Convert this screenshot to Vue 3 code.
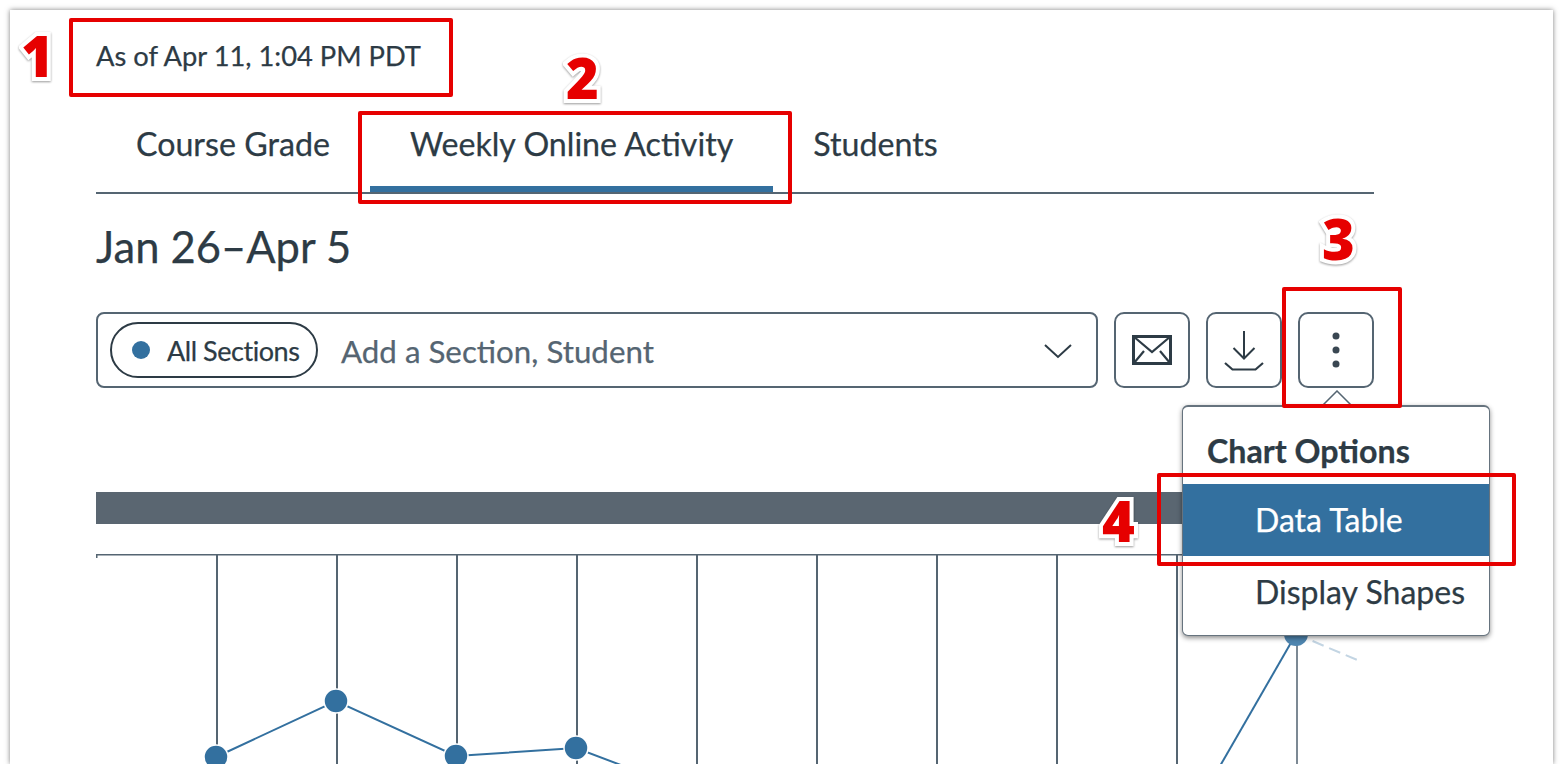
<script setup>
const tabs = [
  { label: 'Course Grade', active: false },
  { label: 'Weekly Online Activity', active: true },
  { label: 'Students', active: false },
]

const gridLines = [
  { x: 217, color: '#556572' },
  { x: 337, color: '#556572' },
  { x: 457, color: '#556572' },
  { x: 577, color: '#556572' },
  { x: 697, color: '#556572' },
  { x: 817, color: '#556572' },
  { x: 937, color: '#556572' },
  { x: 1057, color: '#556572' },
  { x: 1177, color: '#556572' },
  { x: 1297, color: '#7c8994' },
]

const points = [
  { x: 216, y: 757 },
  { x: 336, y: 701 },
  { x: 456, y: 756 },
  { x: 576, y: 748 },
]

const callouts = [
  { id: 1, cls: 'box-one' },
  { id: 2, cls: 'box-two' },
  { id: 3, cls: 'box-three' },
  { id: 4, cls: 'box-four' },
]
</script>

<template>
  <div class="frame">
    <p class="as-of">As of Apr 11, 1:04 PM PDT</p>

    <nav class="tabs">
      <span v-for="tab in tabs" :key="tab.label" class="tab" :class="{ active: tab.active }">{{ tab.label }}</span>
    </nav>

    <h1 class="range">Jan 26–Apr 5</h1>

    <div class="toolbar">
      <div class="select">
        <span class="chip"><i class="chip-dot"></i>All Sections</span>
        <span class="placeholder">Add a Section, Student</span>
        <svg class="chevron" width="30" height="16" viewBox="0 0 30 16">
          <path d="M2 2 L15 14 L28 2" fill="none" stroke="#2d3b45" stroke-width="2" />
        </svg>
      </div>
      <button class="icon-btn">
        <svg width="42" height="32" viewBox="0 0 42 32">
          <rect x="2.500" y="2.500" width="37" height="27" fill="none" stroke="#2d3b45" stroke-width="3" />
          <path d="M2 2 L21 18 L40 2 M3 29 L13 17 M39 29 L29 17" fill="none" stroke="#2d3b45" stroke-width="2.200" />
        </svg>
      </button>
      <button class="icon-btn">
        <svg width="42" height="42" viewBox="0 0 42 42">
          <path d="M21 2 V29 M10.500 19 L21 29.500 L31.500 19" fill="none" stroke="#2d3b45" stroke-width="2" />
          <path d="M2 34 L9.500 40.500 H32.500 L40 34" fill="none" stroke="#2d3b45" stroke-width="2.200" />
        </svg>
      </button>
      <button class="icon-btn">
        <svg width="10" height="38" viewBox="0 0 10 38">
          <circle cx="5" cy="5" r="3.500" fill="#3a4752" />
          <circle cx="5" cy="19" r="3.500" fill="#3a4752" />
          <circle cx="5" cy="33" r="3.500" fill="#3a4752" />
        </svg>
      </button>
    </div>

    <div class="banner"></div>

    <svg class="chart" width="1290" height="212" viewBox="96 554 1290 212">
      <path d="M96.750 558 V554.750 H1374" fill="none" stroke="#556572" stroke-width="1.500" />
      <line v-for="g in gridLines" :key="g.x" :x1="g.x" y1="554" :x2="g.x" y2="766" :stroke="g.color" stroke-width="2" />
      <polyline points="216,757 336,701 456,756 576,748 634,770" fill="none" stroke="#33709f" stroke-width="2" />
      <line x1="1296" y1="634" x2="1220" y2="766" stroke="#33709f" stroke-width="2" />
      <line x1="1296" y1="634" x2="1362" y2="662" stroke="#c3d5e3" stroke-width="2" stroke-dasharray="12 6" />
      <circle v-for="p in points" :key="p.x" :cx="p.x" :cy="p.y" r="12" fill="#33709f" stroke="#fff" stroke-width="1.500" />
      <circle cx="1296" cy="634" r="12" fill="#4f86b0" />
    </svg>

    <div class="menu">
      <svg class="menu-arrow" width="36" height="18" viewBox="0 0 36 18">
        <path d="M1 18 L18 1 L35 18" fill="#fff" stroke="#556572" stroke-width="1.500" />
      </svg>
      <div class="menu-title">Chart Options</div>
      <div class="menu-item selected">Data Table</div>
      <div class="menu-item">Display Shapes</div>
    </div>

    <div v-for="c in callouts" :key="c.id" class="callout-box" :class="c.cls"></div>
    <span v-for="c in callouts" :key="'n' + c.id" class="callout-num" :class="'num-' + c.id">{{ c.id }}</span>
  </div>
</template>

<style scoped>
.frame {
  position: relative;
  box-sizing: border-box;
  width: 1543px;
  height: 754px;
  margin: 10px 0 0 10px;
  padding: 26px 0 0 86px;
  overflow: hidden;
  background: #fff;
  box-shadow: 0 0 5px rgba(0, 0, 0, 0.5);
  color: #2d3b45;
  font-family: Lato, "Open Sans", sans-serif;
  -webkit-text-stroke: 0.25px currentColor;
}

.as-of {
  margin: 0;
  font-size: 27.3px;
  line-height: 40px;
}

.tabs {
  display: flex;
  width: 1278px;
  margin-top: 36px;
  border-bottom: 2px solid #556572;
}

.tab {
  box-sizing: border-box;
  height: 80px;
  padding: 12px 40px 0;
  border-bottom: 6px solid transparent;
  font-size: 32.2px;
  line-height: 40px;
}

.tab.active {
  border-bottom-color: #33709f;
}

.range {
  margin: 22px 0 0;
  padding-bottom: 1px;
  font-size: 43.5px;
  font-weight: 400;
  line-height: 60px;
}

.toolbar {
  display: flex;
  gap: 16px;
  width: 1278px;
  height: 76px;
  margin-top: 35px;
}

.select {
  box-sizing: border-box;
  display: flex;
  flex: 1;
  align-items: center;
  padding: 0 23px 0 12px;
  border: 2px solid #556572;
  border-radius: 8px;
}

.chip {
  box-sizing: border-box;
  display: flex;
  align-items: center;
  width: 208px;
  height: 56px;
  padding-left: 20px;
  border: 2px solid #2d3b45;
  border-radius: 28px;
  font-size: 27px;
  letter-spacing: -0.45px;
}

.chip-dot {
  width: 18px;
  height: 18px;
  margin-right: 17px;
  border-radius: 50%;
  background: #33709f;
}

.placeholder {
  margin: 2px 0 0 23px;
  color: #556572;
  font-size: 31.3px;
}

.chevron {
  margin: 1px 0 0 auto;
}

.icon-btn {
  box-sizing: border-box;
  display: flex;
  align-items: center;
  justify-content: center;
  width: 76px;
  height: 76px;
  padding: 0;
  border: 2px solid #556572;
  border-radius: 10px;
  background: #fff;
}

.banner {
  width: 1086px;
  height: 32px;
  margin-top: 104px;
  background: #5a6671;
}

.chart {
  display: block;
  margin-top: 30px;
}

.menu {
  position: absolute;
  top: 395px;
  left: 1172px;
  box-sizing: border-box;
  width: 308px;
  height: 231px;
  padding-top: 24px;
  border: 1px solid #66737e;
  border-top-width: 2px;
  border-radius: 6px;
  background: #fff;
  box-shadow: 0 2px 5px rgba(0, 0, 0, 0.45);
}

.menu-arrow {
  position: absolute;
  top: -17px;
  left: 136px;
}

.menu-title {
  height: 53px;
  padding-left: 24px;
  font-size: 32.2px;
  font-weight: 700;
  line-height: 40px;
}

.menu-item {
  height: 72px;
  padding-left: 72px;
  font-size: 32px;
  line-height: 72px;
}

.menu-item.selected {
  background: #33709f;
  color: #fff;
}

.callout-box {
  position: absolute;
  box-sizing: border-box;
  border: 4px solid #e60000;
  border-radius: 2px;
}

.box-one { top: 8px; left: 59px; width: 384px; height: 79px; }
.box-two { top: 101px; left: 348px; width: 434px; height: 93px; }
.box-three { top: 277px; left: 1272px; width: 120px; height: 121px; }
.box-four { top: 463px; left: 1147px; width: 359px; height: 93px; }

.callout-num {
  position: absolute;
  color: #e60000;
  font-family: "Open Sans", sans-serif;
  font-size: 56px;
  font-weight: 800;
  line-height: 60px;
  -webkit-text-stroke: 8px #fff;
  paint-order: stroke fill;
  filter: drop-shadow(0 1px 1px rgba(0, 0, 0, 0.4));
}

.num-1 { top: 15px; left: 11px; }
.num-2 { top: 37px; left: 556px; }
.num-3 { top: 198px; left: 1312px; }
.num-4 { top: 480px; left: 1092px; }
</style>

<style>
html, body {
  background: #fff;
}
</style>
